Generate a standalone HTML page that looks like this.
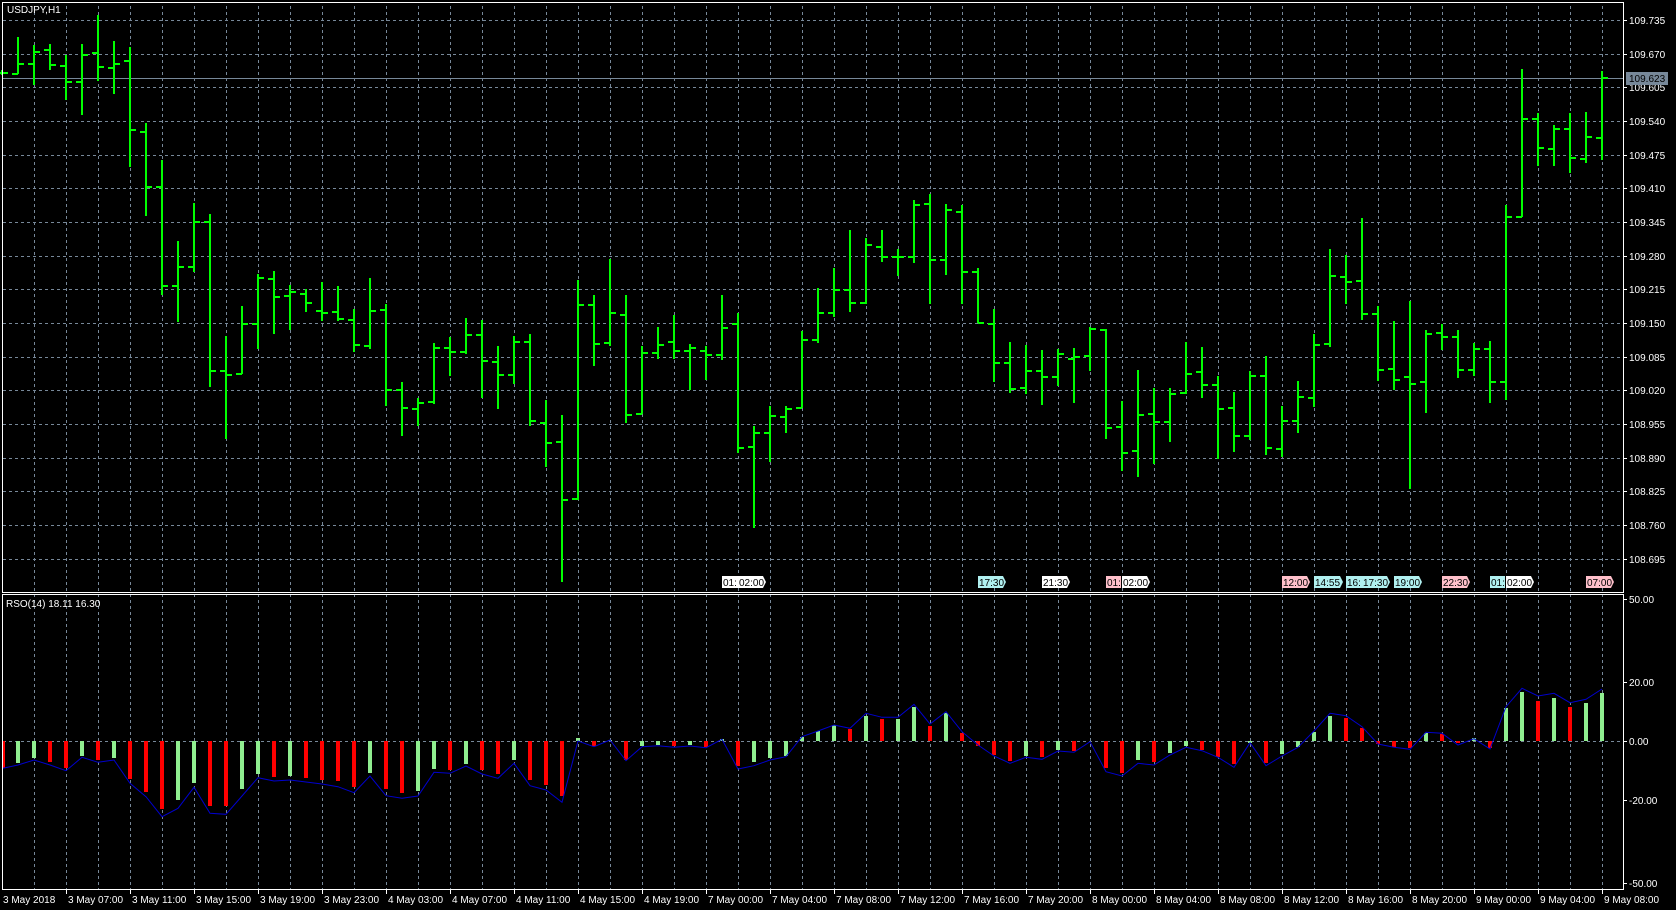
<!DOCTYPE html>
<html><head><meta charset="utf-8">
<style>
html,body{margin:0;padding:0;background:#000;}
body{width:1676px;height:910px;overflow:hidden;position:relative;}
svg{position:absolute;left:0;top:0;}
text{font-family:"Liberation Sans",sans-serif;font-size:10px;fill:#fff;}
.e{fill:#000;font-size:10px;}
</style></head>
<body>
<svg width="1676" height="910" xmlns="http://www.w3.org/2000/svg" shape-rendering="crispEdges">
<defs>
<pattern id="vg" x="34" y="0" width="32" height="910" patternUnits="userSpaceOnUse">
<line x1="0.5" y1="0" x2="0.5" y2="910" stroke="#778899" stroke-dasharray="3,3"/>
</pattern>
</defs>
<rect width="1676" height="910" fill="#000"/>
<rect x="34" y="3" width="1589" height="589" fill="url(#vg)"/>
<rect x="34" y="595" width="1589" height="294" fill="url(#vg)"/>
<g stroke="#778899" stroke-dasharray="3,3">
<line x1="3" y1="20.5" x2="1623" y2="20.5"/><line x1="3" y1="54.5" x2="1623" y2="54.5"/><line x1="3" y1="87.5" x2="1623" y2="87.5"/><line x1="3" y1="121.5" x2="1623" y2="121.5"/><line x1="3" y1="155.5" x2="1623" y2="155.5"/><line x1="3" y1="188.5" x2="1623" y2="188.5"/><line x1="3" y1="222.5" x2="1623" y2="222.5"/><line x1="3" y1="256.5" x2="1623" y2="256.5"/><line x1="3" y1="289.5" x2="1623" y2="289.5"/><line x1="3" y1="323.5" x2="1623" y2="323.5"/><line x1="3" y1="357.5" x2="1623" y2="357.5"/><line x1="3" y1="390.5" x2="1623" y2="390.5"/><line x1="3" y1="424.5" x2="1623" y2="424.5"/><line x1="3" y1="458.5" x2="1623" y2="458.5"/><line x1="3" y1="491.5" x2="1623" y2="491.5"/><line x1="3" y1="525.5" x2="1623" y2="525.5"/><line x1="3" y1="559.5" x2="1623" y2="559.5"/>
<line x1="3" y1="741.5" x2="1623" y2="741.5"/>
</g>
<line x1="3" y1="78.5" x2="1623" y2="78.5" stroke="#778899"/>
<g stroke="#fff">
<line x1="1623" y1="20.5" x2="1627" y2="20.5"/><line x1="1623" y1="54.5" x2="1627" y2="54.5"/><line x1="1623" y1="87.5" x2="1627" y2="87.5"/><line x1="1623" y1="121.5" x2="1627" y2="121.5"/><line x1="1623" y1="155.5" x2="1627" y2="155.5"/><line x1="1623" y1="188.5" x2="1627" y2="188.5"/><line x1="1623" y1="222.5" x2="1627" y2="222.5"/><line x1="1623" y1="256.5" x2="1627" y2="256.5"/><line x1="1623" y1="289.5" x2="1627" y2="289.5"/><line x1="1623" y1="323.5" x2="1627" y2="323.5"/><line x1="1623" y1="357.5" x2="1627" y2="357.5"/><line x1="1623" y1="390.5" x2="1627" y2="390.5"/><line x1="1623" y1="424.5" x2="1627" y2="424.5"/><line x1="1623" y1="458.5" x2="1627" y2="458.5"/><line x1="1623" y1="491.5" x2="1627" y2="491.5"/><line x1="1623" y1="525.5" x2="1627" y2="525.5"/><line x1="1623" y1="559.5" x2="1627" y2="559.5"/>
<line x1="1623" y1="599.5" x2="1627" y2="599.5"/><line x1="1623" y1="682.5" x2="1627" y2="682.5"/><line x1="1623" y1="741.5" x2="1627" y2="741.5"/><line x1="1623" y1="800.5" x2="1627" y2="800.5"/><line x1="1623" y1="883.5" x2="1627" y2="883.5"/>
</g>
<g>
<text x="1629" y="24">109.735</text><text x="1629" y="58">109.670</text><text x="1629" y="91">109.605</text><text x="1629" y="125">109.540</text><text x="1629" y="159">109.475</text><text x="1629" y="192">109.410</text><text x="1629" y="226">109.345</text><text x="1629" y="260">109.280</text><text x="1629" y="293">109.215</text><text x="1629" y="327">109.150</text><text x="1629" y="361">109.085</text><text x="1629" y="394">109.020</text><text x="1629" y="428">108.955</text><text x="1629" y="462">108.890</text><text x="1629" y="495">108.825</text><text x="1629" y="529">108.760</text><text x="1629" y="563">108.695</text>
<text x="1629" y="603">50.00</text><text x="1629" y="686">20.00</text><text x="1629" y="745">0.00</text><text x="1629" y="804">-20.00</text><text x="1629" y="887">-50.00</text>
</g>
<rect x="1626" y="72" width="42" height="13" fill="#778899"/><text x="1629" y="82" class="e">109.623</text>

<path fill="none" stroke="#00ff00" stroke-width="2" d="
M2 70V75M-4 73H2M2 73H8
M18 37V74M12 74H18M18 64H24
M34 45V85M28 64H34M34 52H40
M50 44V70M44 50H50M50 65H56
M66 55V100M60 66H66M66 82H72
M82 44V115M76 82H82M82 55H88
M98 15V81M92 53H98M98 67H104
M114 41V94M108 68H114M114 64H120
M130 47V167M124 61H130M130 130H136
M146 123V216M140 132H146M146 187H152
M162 160V295M156 187H162M162 286H168
M178 241V322M172 286H178M178 267H184
M194 203V272M188 267H194M194 222H200
M210 214V387M204 222H210M210 371H216
M226 336V439M220 371H226M226 375H232
M242 306V374M236 374H242M242 324H248
M258 274V349M252 324H258M258 278H264
M274 271V334M268 279H274M274 297H280
M290 285V330M284 296H290M290 292H296
M306 289V312M300 294H306M306 303H312
M322 282V321M316 311H322M322 313H328
M338 286V321M332 312H338M338 319H344
M354 309V352M348 320H354M354 345H360
M370 278V349M364 346H370M370 311H376
M386 304V406M380 310H386M386 390H392
M402 382V436M396 390H402M402 408H408
M418 398V426M412 409H418M418 403H424
M434 343V404M428 402H434M434 348H440
M450 337V376M444 348H450M450 352H456
M466 318V354M460 352H466M466 335H472
M482 320V398M476 335H482M482 361H488
M498 346V409M492 362H498M498 375H504
M514 336V384M508 375H514M514 342H520
M530 334V426M524 342H530M530 421H536
M546 400V467M540 423H546M546 443H552
M562 415V582M556 442H562M562 500H568
M578 280V500M572 499H578M578 305H584
M594 295V366M588 305H594M594 344H600
M610 259V346M604 343H610M610 313H616
M626 295V423M620 315H626M626 415H632
M642 346V414M636 414H642M642 353H648
M658 327V359M652 353H658M658 345H664
M674 315V359M668 342H674M674 351H680
M690 344V390M684 351H690M690 348H696
M706 346V380M700 351H706M706 355H712
M722 295V360M716 355H722M722 328H728
M738 313V453M732 324H738M738 448H744
M754 426V528M748 447H754M754 433H760
M770 406V462M764 433H770M770 416H776
M786 406V433M780 417H786M786 409H792
M802 331V408M796 408H802M802 340H808
M818 288V343M812 340H818M818 313H824
M834 268V317M828 313H834M834 290H840
M850 230V312M844 290H850M850 303H856
M866 238V304M860 303H866M866 245H872
M882 230V262M876 247H882M882 257H888
M898 249V276M892 257H898M898 257H904
M914 200V263M908 257H914M914 205H920
M930 194V304M924 204H930M930 260H936
M946 204V275M940 260H946M946 210H952
M962 205V304M956 212H962M962 272H968
M978 268V323M972 272H978M978 323H984
M994 309V382M988 324H994M994 363H1000
M1010 342V393M1004 363H1010M1010 389H1016
M1026 345V394M1020 388H1026M1026 371H1032
M1042 350V405M1036 371H1042M1042 377H1048
M1058 349V386M1052 377H1058M1058 354H1064
M1074 348V403M1068 359H1074M1074 357H1080
M1090 327V371M1084 356H1090M1090 329H1096
M1106 329V439M1100 330H1106M1106 428H1112
M1122 401V471M1116 427H1122M1122 453H1128
M1138 370V477M1132 451H1138M1138 415H1144
M1154 388V464M1148 414H1154M1154 422H1160
M1170 388V442M1164 422H1170M1170 394H1176
M1186 342V394M1180 393H1186M1186 374H1192
M1202 347V398M1196 372H1202M1202 385H1208
M1218 376V459M1212 385H1218M1218 409H1224
M1234 392V452M1228 408H1234M1234 436H1240
M1250 371V440M1244 436H1250M1250 376H1256
M1266 356V455M1260 376H1266M1266 448H1272
M1282 406V457M1276 449H1282M1282 421H1288
M1298 381V433M1292 421H1298M1298 397H1304
M1314 334V407M1308 398H1314M1314 345H1320
M1330 249V347M1324 344H1330M1330 276H1336
M1346 255V304M1340 277H1346M1346 282H1352
M1362 218V320M1356 281H1362M1362 314H1368
M1378 306V381M1372 314H1378M1378 370H1384
M1394 321V390M1388 369H1394M1394 380H1400
M1410 301V489M1404 377H1410M1410 384H1416
M1426 330V413M1420 382H1426M1426 334H1432
M1442 324V350M1436 333H1442M1442 337H1448
M1458 330V378M1452 337H1458M1458 370H1464
M1474 343V376M1468 370H1474M1474 349H1480
M1490 341V403M1484 349H1490M1490 382H1496
M1506 205V400M1500 382H1506M1506 217H1512
M1522 69V217M1516 217H1522M1522 119H1528
M1538 113V166M1532 119H1538M1538 148H1544
M1554 125V166M1548 149H1554M1554 129H1560
M1570 113V173M1564 129H1570M1570 158H1576
M1586 112V163M1580 159H1586M1586 137H1592
M1602 71V160M1596 138H1602M1602 78H1608"/>

<g fill="#90ee90">
<rect x="16" y="741" width="4" height="22"/><rect x="32" y="741" width="4" height="17"/><rect x="80" y="741" width="4" height="15"/><rect x="112" y="741" width="4" height="17"/>
<rect x="176" y="741" width="4" height="59"/><rect x="192" y="741" width="4" height="42"/><rect x="240" y="741" width="4" height="48"/><rect x="256" y="741" width="4" height="33"/>
<rect x="288" y="741" width="4" height="35"/><rect x="368" y="741" width="4" height="32"/><rect x="416" y="741" width="4" height="50"/><rect x="432" y="741" width="4" height="28"/>
<rect x="464" y="741" width="4" height="23"/><rect x="512" y="741" width="4" height="19"/><rect x="576" y="738" width="4" height="3"/><rect x="608" y="740" width="4" height="1"/>
<rect x="640" y="741" width="4" height="5"/><rect x="656" y="741" width="4" height="4"/><rect x="688" y="741" width="4" height="4"/><rect x="720" y="739" width="4" height="2"/>
<rect x="752" y="741" width="4" height="21"/><rect x="768" y="741" width="4" height="17"/><rect x="784" y="741" width="4" height="15"/><rect x="800" y="737" width="4" height="4"/>
<rect x="816" y="731" width="4" height="10"/><rect x="832" y="725" width="4" height="16"/><rect x="864" y="716" width="4" height="25"/><rect x="896" y="719" width="4" height="22"/>
<rect x="912" y="707" width="4" height="34"/><rect x="944" y="713" width="4" height="28"/><rect x="1024" y="741" width="4" height="15"/><rect x="1056" y="741" width="4" height="9"/>
<rect x="1136" y="741" width="4" height="19"/><rect x="1168" y="741" width="4" height="12"/><rect x="1184" y="741" width="4" height="5"/><rect x="1248" y="741" width="4" height="2"/>
<rect x="1280" y="741" width="4" height="13"/><rect x="1296" y="741" width="4" height="6"/><rect x="1312" y="732" width="4" height="9"/><rect x="1328" y="716" width="4" height="25"/>
<rect x="1424" y="733" width="4" height="8"/><rect x="1472" y="738" width="4" height="3"/><rect x="1504" y="708" width="4" height="33"/><rect x="1520" y="692" width="4" height="49"/>
<rect x="1552" y="698" width="4" height="43"/><rect x="1584" y="703" width="4" height="38"/><rect x="1600" y="693" width="4" height="48"/>
</g>
<g fill="#ff0000">
<rect x="3" y="741" width="2" height="27"/><rect x="48" y="741" width="4" height="21"/><rect x="64" y="741" width="4" height="27"/><rect x="96" y="741" width="4" height="19"/>
<rect x="128" y="741" width="4" height="38"/><rect x="144" y="741" width="4" height="51"/><rect x="160" y="741" width="4" height="68"/><rect x="208" y="741" width="4" height="65"/>
<rect x="224" y="741" width="4" height="65"/><rect x="272" y="741" width="4" height="36"/><rect x="304" y="741" width="4" height="37"/><rect x="320" y="741" width="4" height="39"/>
<rect x="336" y="741" width="4" height="40"/><rect x="352" y="741" width="4" height="46"/><rect x="384" y="741" width="4" height="48"/><rect x="400" y="741" width="4" height="52"/>
<rect x="448" y="741" width="4" height="29"/><rect x="480" y="741" width="4" height="29"/><rect x="496" y="741" width="4" height="33"/><rect x="528" y="741" width="4" height="39"/>
<rect x="544" y="741" width="4" height="44"/><rect x="560" y="741" width="4" height="55"/><rect x="592" y="741" width="4" height="5"/><rect x="624" y="741" width="4" height="19"/>
<rect x="672" y="741" width="4" height="5"/><rect x="704" y="741" width="4" height="6"/><rect x="736" y="741" width="4" height="25"/><rect x="848" y="729" width="4" height="12"/>
<rect x="880" y="719" width="4" height="22"/><rect x="928" y="726" width="4" height="15"/><rect x="960" y="733" width="4" height="8"/><rect x="976" y="741" width="4" height="5"/>
<rect x="992" y="741" width="4" height="14"/><rect x="1008" y="741" width="4" height="20"/><rect x="1040" y="741" width="4" height="16"/><rect x="1072" y="741" width="4" height="10"/>
<rect x="1104" y="741" width="4" height="27"/><rect x="1120" y="741" width="4" height="32"/><rect x="1152" y="741" width="4" height="21"/><rect x="1200" y="741" width="4" height="9"/>
<rect x="1216" y="741" width="4" height="16"/><rect x="1232" y="741" width="4" height="23"/><rect x="1264" y="741" width="4" height="22"/><rect x="1344" y="718" width="4" height="23"/>
<rect x="1360" y="728" width="4" height="13"/><rect x="1376" y="741" width="4" height="3"/><rect x="1392" y="741" width="4" height="6"/><rect x="1408" y="741" width="4" height="7"/>
<rect x="1440" y="734" width="4" height="7"/><rect x="1456" y="741" width="4" height="2"/><rect x="1488" y="741" width="4" height="7"/><rect x="1536" y="701" width="4" height="40"/>
<rect x="1568" y="707" width="4" height="34"/>
</g>
<polyline fill="none" stroke="#0000cd" stroke-width="1" shape-rendering="auto" points="3,768.3 18,765 34,760 50,765 66,770.7 82,757.3 98,762.3 114,760 130,783.3 146,796.7 162,816.7 178,808.3 194,787.3 210,813.3 226,814.3 242,796 258,777.7 274,781 290,780 306,782 322,784 338,786.7 354,792.7 370,776 386,795.7 402,798.3 418,796 434,772.3 450,773.3 466,766 482,774 498,778.3 514,763.3 530,785.7 546,790 562,802.3 578,741 594,746.7 610,740 626,760.7 642,746.7 658,745.7 674,747.3 690,746 706,747.7 722,739.3 738,769 754,765.7 770,760 786,756.7 802,736.7 818,731 834,725 850,728.3 866,713.3 882,717.3 898,717.3 914,704.3 930,724 946,711.7 962,731.7 978,745 994,756 1010,763.3 1026,757.3 1042,759.3 1058,751 1074,752.3 1090,741.7 1106,771.7 1122,776 1138,763.3 1154,765 1170,755 1186,747.3 1202,750.7 1218,757.3 1234,767.3 1250,742.7 1266,765.7 1282,756 1298,747.3 1314,731 1330,713.3 1346,715.7 1362,726.7 1378,744 1394,747.3 1410,749.3 1426,732.3 1442,733.3 1458,745 1474,738.7 1490,749 1506,706.7 1522,688.3 1538,696 1554,693.3 1570,702.7 1586,699.3 1602,689"/>

<rect x="2.5" y="2.5" width="1621" height="590" fill="none" stroke="#fff"/>
<rect x="2.5" y="594.5" width="1621" height="295" fill="none" stroke="#fff"/>

<text x="7" y="13">USDJPY,H1</text>
<text x="6" y="607">RSO(14) 18.11 16.30</text>

<g>
<polygon points="722,576 738,576 738,588 722,588" fill="#fff"/><text x="723" y="586" class="e">01:</text>
<polygon points="738,576 763,576 766,582 763,588 738,588" fill="#fff"/><text x="739" y="586" class="e">02:00</text>
<polygon points="978,576 1003,576 1006,582 1003,588 978,588" fill="#b0f0f0"/><text x="979" y="586" class="e">17:30</text>
<polygon points="1042,576 1067,576 1070,582 1067,588 1042,588" fill="#fff"/><text x="1043" y="586" class="e">21:30</text>
<polygon points="1106,576 1121,576 1121,588 1106,588" fill="#ffc0cb"/><text x="1107" y="586" class="e">01:</text>
<polygon points="1122,576 1147,576 1150,582 1147,588 1122,588" fill="#fff"/><text x="1123" y="586" class="e">02:00</text>
<polygon points="1282,576 1307,576 1310,582 1307,588 1282,588" fill="#ffc0cb"/><text x="1283" y="586" class="e">12:00</text>
<polygon points="1314,576 1340,576 1343,582 1340,588 1314,588" fill="#b0f0f0"/><text x="1315" y="586" class="e">14:55</text>
<polygon points="1346,576 1362,576 1362,588 1346,588" fill="#b0f0f0"/><text x="1347" y="586" class="e">16:</text>
<polygon points="1362,576 1387,576 1390,582 1387,588 1362,588" fill="#b0f0f0"/><text x="1363" y="586" class="e">17:30</text>
<polygon points="1394,576 1419,576 1422,582 1419,588 1394,588" fill="#b0f0f0"/><text x="1395" y="586" class="e">19:00</text>
<polygon points="1442,576 1467,576 1470,582 1467,588 1442,588" fill="#ffc0cb"/><text x="1443" y="586" class="e">22:30</text>
<polygon points="1490,576 1505,576 1505,588 1490,588" fill="#b0f0f0"/><text x="1491" y="586" class="e">01:</text>
<polygon points="1506,576 1531,576 1534,582 1531,588 1506,588" fill="#fff"/><text x="1507" y="586" class="e">02:00</text>
<polygon points="1586,576 1611,576 1614,582 1611,588 1586,588" fill="#ffc0cb"/><text x="1587" y="586" class="e">07:00</text>
</g>

<path stroke="#fff" d="M66.5 890V894M130.5 890V894M194.5 890V894M258.5 890V894M322.5 890V894M386.5 890V894M450.5 890V894M514.5 890V894M578.5 890V894M642.5 890V894M706.5 890V894M770.5 890V894M834.5 890V894M898.5 890V894M962.5 890V894M1026.5 890V894M1090.5 890V894M1154.5 890V894M1218.5 890V894M1282.5 890V894M1346.5 890V894M1410.5 890V894M1474.5 890V894M1538.5 890V894M1602.5 890V894"/>
<g>
<text x="3" y="903">3 May 2018</text><text x="68" y="903">3 May 07:00</text><text x="132" y="903">3 May 11:00</text><text x="196" y="903">3 May 15:00</text><text x="260" y="903">3 May 19:00</text><text x="324" y="903">3 May 23:00</text><text x="388" y="903">4 May 03:00</text><text x="452" y="903">4 May 07:00</text><text x="516" y="903">4 May 11:00</text><text x="580" y="903">4 May 15:00</text><text x="644" y="903">4 May 19:00</text><text x="708" y="903">7 May 00:00</text><text x="772" y="903">7 May 04:00</text><text x="836" y="903">7 May 08:00</text><text x="900" y="903">7 May 12:00</text><text x="964" y="903">7 May 16:00</text><text x="1028" y="903">7 May 20:00</text><text x="1092" y="903">8 May 00:00</text><text x="1156" y="903">8 May 04:00</text><text x="1220" y="903">8 May 08:00</text><text x="1284" y="903">8 May 12:00</text><text x="1348" y="903">8 May 16:00</text><text x="1412" y="903">8 May 20:00</text><text x="1476" y="903">9 May 00:00</text><text x="1540" y="903">9 May 04:00</text><text x="1604" y="903">9 May 08:00</text>
</g>
</svg>
</body></html>
